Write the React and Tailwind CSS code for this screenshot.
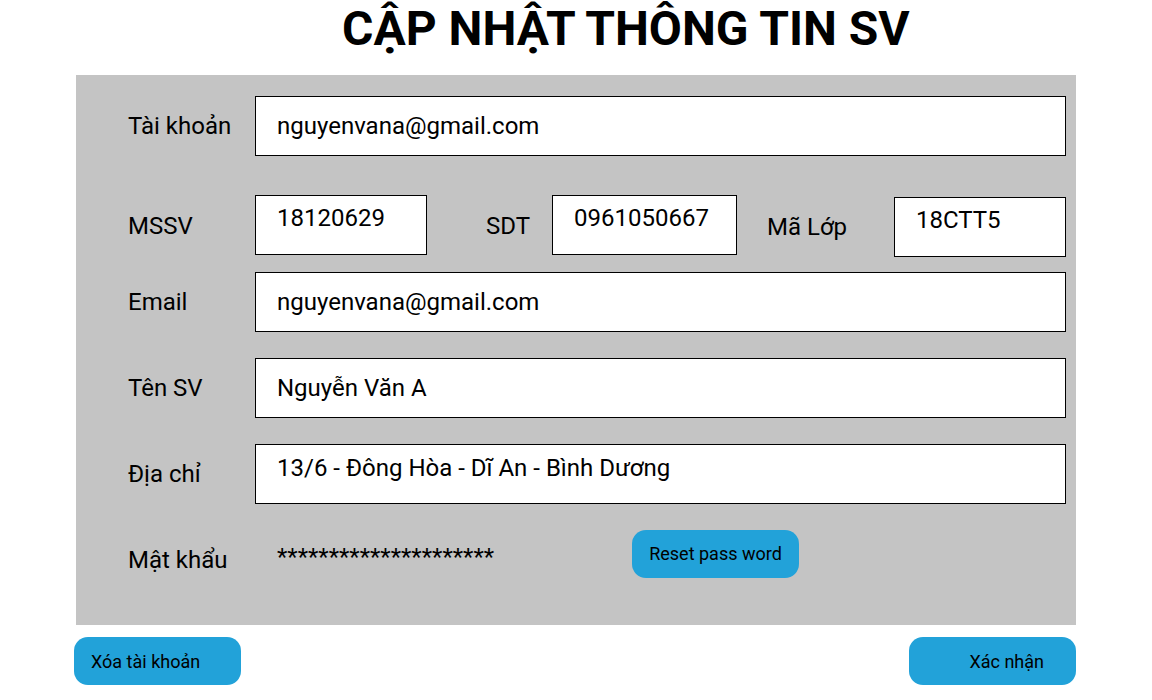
import React from "react";

const F = { fontFamily: "Roboto, 'Noto Sans', sans-serif" };

function Box({ children, className = "", align = "center" }) {
  return (
    <div
      className={`bg-white border border-black h-[60px] flex pl-[21px] text-[24px] leading-[28px] text-black ${
        align === "center" ? "items-center" : "items-start"
      } ${className}`}
    >
      {children}
    </div>
  );
}

function Label({ children, className = "" }) {
  return (
    <div className={`w-[127px] shrink-0 text-[24px] leading-[28px] text-black ${className}`}>{children}</div>
  );
}

export default function App() {
  return (
    <div className="w-[1152px] h-[700px] bg-white relative" style={F}>
      <div className="h-[75px] pl-[342px] flex items-center">
        <h1 className="text-[48px] font-bold leading-none text-black -mt-[18px]">
          CẬP NHẬT THÔNG TIN SV
        </h1>
      </div>
      <div className="ml-[76px] w-[1000px] h-[550px] bg-[#c4c4c4] pl-[52px] pr-[10px] pt-[21px]">
        <div className="flex items-center h-[60px]">
          <Label>Tài khoản</Label>
          <Box className="flex-1">nguyenvana@gmail.com</Box>
        </div>
        <div className="flex items-center mt-[39px] h-[62px]">
          <Label>MSSV</Label>
          <Box className="w-[172px] self-start pt-[8px]" align="top">18120629</Box>
          <div className="w-[59px]" />
          <div className="w-[66px] text-[24px] leading-[28px] text-black">SDT</div>
          <Box className="w-[185px] self-start pt-[8px]" align="top">0961050667</Box>
          <div className="w-[30px]" />
          <div className="w-[127px] text-[24px] leading-[28px] text-black mt-[2px]">Mã Lớp</div>
          <Box className="w-[172px] self-end pt-[8px]" align="top">18CTT5</Box>
        </div>
        <div className="flex items-center mt-[15px] h-[60px]">
          <Label>Email</Label>
          <Box className="flex-1">nguyenvana@gmail.com</Box>
        </div>
        <div className="flex items-center mt-[26px] h-[60px]">
          <Label>Tên SV</Label>
          <Box className="flex-1">Nguyễn Văn A</Box>
        </div>
        <div className="flex items-center mt-[26px] h-[60px]">
          <Label>Địa chỉ</Label>
          <Box className="flex-1 pt-[9px]" align="top">13/6 - Đông Hòa - Dĩ An - Bình Dương</Box>
        </div>
        <div className="flex items-center mt-[26px] h-[48px]">
          <Label className="mt-[12px]">Mật khẩu</Label>
          <div className="w-[377px] pl-[22px] text-[24px] leading-[28px] text-black mt-[6px]">*********************</div>
          <button className="w-[167px] h-[48px] rounded-[14px] bg-[#22a2d9] text-[18px] text-black flex items-center justify-center pb-[2px]">
            Reset pass word
          </button>
        </div>
      </div>
      <div className="ml-[74px] w-[1002px] mt-[12px] flex justify-between">
        <button className="w-[167px] h-[48px] rounded-[14px] bg-[#22a2d9] text-[18px] text-black flex items-center pl-[17px]">
          Xóa tài khoản
        </button>
        <button className="w-[167px] h-[48px] rounded-[14px] bg-[#22a2d9] text-[18px] text-black flex items-center justify-end pr-[32px]">
          Xác nhận
        </button>
      </div>
    </div>
  );
}
